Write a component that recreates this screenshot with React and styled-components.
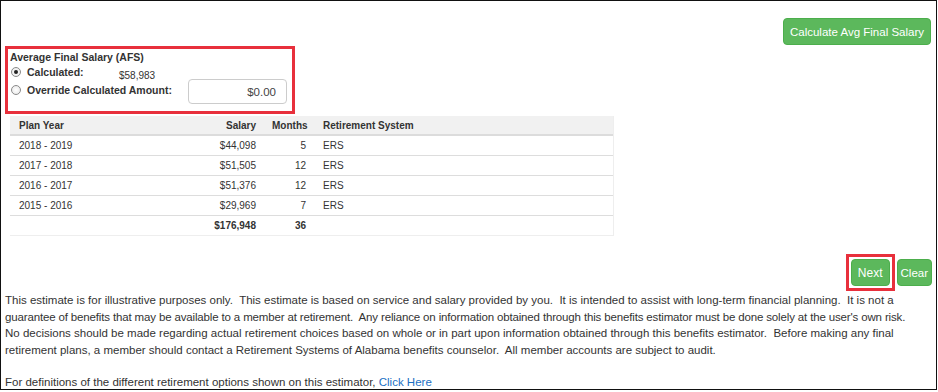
import styled, { createGlobalStyle } from 'styled-components';

const GlobalStyle = createGlobalStyle`
  html, body {
    margin: 0;
    padding: 0;
    background: #fff;
  }
  body {
    font-family: "Liberation Sans", Arial, sans-serif;
    font-size: 11.5px;
    color: #333;
  }
`;

const Frame = styled.div`
  box-sizing: border-box;
  width: 937px;
  height: 390px;
  border: 1px solid #111;
  padding: 0 2px 0 3px;
  overflow: hidden;
`;

const TopBar = styled.div`
  display: flex;
  justify-content: flex-end;
  padding-top: 17px;
  padding-right: 3px;
`;

const Button = styled.button`
  font-family: "Liberation Sans", Arial, sans-serif;
  font-size: ${({ fs }) => fs || 11.5}px;
  color: #fff;
  background: #5cb85c;
  border: 1px solid #4cae4c;
  border-radius: 4px;
  height: 27px;
  padding: 0 ${({ px }) => (px === undefined ? 6 : px)}px;
  cursor: pointer;
`;

const Marker = styled.span`
  display: inline-flex;
  border: 3px solid #e8303c;
  padding: 2px;
`;

const SalaryBox = styled.div`
  box-sizing: border-box;
  width: 290px;
  height: 68px;
  margin: 1px 0 0 1px;
  border: 3px solid #e8303c;
  padding: 2px 4px 0 2px;
  font-size: 10.5px;
`;

const BoxTitle = styled.div`
  font-weight: bold;
  line-height: 13px;
  margin-bottom: 2px;
`;

const RadioRow = styled.div`
  display: flex;
  align-items: flex-start;
  height: ${({ tall }) => (tall ? '24px' : '18px')};
`;

const Radio = styled.input`
  appearance: none;
  box-sizing: border-box;
  width: 10px;
  height: 10px;
  margin: 1px 6px 0 1px;
  border: 1px solid #8a8a8a;
  border-radius: 50%;
  background: radial-gradient(circle, #fff 0%, #e6e6e6 100%);
  display: grid;
  place-items: center;
  &:checked::after {
    content: '';
    width: 4px;
    height: 4px;
    border-radius: 50%;
    background: #222;
  }
`;

const RadioLabel = styled.label`
  font-weight: bold;
  width: ${({ w }) => w}px;
  white-space: nowrap;
  line-height: 12px;
`;

const Amount = styled.span`
  font-size: 10px;
  line-height: 12px;
  margin-top: 4px;
`;

const AmountInput = styled.input`
  box-sizing: border-box;
  width: 99px;
  height: 25px;
  margin-top: -5px;
  border: 1px solid #ccc;
  border-radius: 4px;
  text-align: right;
  padding: 0 10px;
  font-family: "Liberation Sans", Arial, sans-serif;
  font-size: 11.5px;
  color: #444;
`;

const Table = styled.div`
  width: 603px;
  margin: 2px 0 0 6px;
  border-right: 1px solid #eee;
  border-bottom: 1px solid #eee;
  font-size: 10px;
`;

const Row = styled.div`
  display: grid;
  grid-template-columns: 170px 83px 50px 1fr;
  height: ${({ head }) => (head ? '18px' : '19px')};
  background: ${({ head }) => (head ? '#f1f1f1' : '#fff')};
  border-bottom: ${({ head }) => (head ? '2px solid #dcdcdc' : '1px solid #ddd')};
  font-weight: ${({ bold }) => (bold ? 'bold' : 'normal')};
  align-items: center;
  &:last-child {
    border-bottom: none;
  }
`;

const Cell = styled.div`
  padding: 0 ${({ last }) => (last ? '8px 0 10px' : '7px 0 9px')};
  text-align: ${({ right }) => (right ? 'right' : 'left')};
`;

const ActionBar = styled.div`
  display: flex;
  justify-content: flex-end;
  align-items: center;
  gap: 2px;
  margin-top: 18px;
  padding-right: 2px;
`;

const Disclaimer = styled.div`
  margin: 1px 0 0 1px;
  line-height: 16.5px;
`;

const Line = styled.div`
  white-space: pre;
  letter-spacing: ${({ tight }) => (tight ? '-0.15px' : 'normal')};
`;

const Definitions = styled.p`
  margin: 16px 0 0 1px;
  line-height: 16.5px;
`;

const Link = styled.a`
  color: #1a6fc4;
  text-decoration: none;
`;

const rows = [
  ['2018 - 2019', '$44,098', '5', 'ERS'],
  ['2017 - 2018', '$51,505', '12', 'ERS'],
  ['2016 - 2017', '$51,376', '12', 'ERS'],
  ['2015 - 2016', '$29,969', '7', 'ERS'],
];

const disclaimer = [
  ['This estimate is for illustrative purposes only.  This estimate is based on service and salary provided by you.  It is intended to assist with long-term financial planning.  It is not a', false],
  ["guarantee of benefits that may be available to a member at retirement.  Any reliance on information obtained through this benefits estimator must be done solely at the user's own risk.", true],
  ['No decisions should be made regarding actual retirement choices based on whole or in part upon information obtained through this benefits estimator.  Before making any final', false],
  ['retirement plans, a member should contact a Retirement Systems of Alabama benefits counselor.  All member accounts are subject to audit.', false],
];

export default function App() {
  return (
    <>
      <GlobalStyle />
      <Frame>
        <TopBar>
          <Button>Calculate Avg Final Salary</Button>
        </TopBar>

        <SalaryBox>
          <BoxTitle>Average Final Salary (AFS)</BoxTitle>
          <RadioRow>
            <Radio type="radio" name="afs" defaultChecked />
            <RadioLabel w={92}>Calculated:</RadioLabel>
            <Amount>$58,983</Amount>
          </RadioRow>
          <RadioRow tall>
            <Radio type="radio" name="afs" />
            <RadioLabel w={161}>Override Calculated Amount:</RadioLabel>
            <AmountInput defaultValue="$0.00" />
          </RadioRow>
        </SalaryBox>

        <Table>
          <Row head bold>
            <Cell>Plan Year</Cell>
            <Cell right>Salary</Cell>
            <Cell right>Months</Cell>
            <Cell last>Retirement System</Cell>
          </Row>
          {rows.map((r) => (
            <Row key={r[0]}>
              <Cell>{r[0]}</Cell>
              <Cell right>{r[1]}</Cell>
              <Cell right>{r[2]}</Cell>
              <Cell last>{r[3]}</Cell>
            </Row>
          ))}
          <Row bold>
            <Cell />
            <Cell right>$176,948</Cell>
            <Cell right>36</Cell>
            <Cell last />
          </Row>
        </Table>

        <ActionBar>
          <Marker>
            <Button fs={12}>Next</Button>
          </Marker>
          <Button fs={11.5} px={3}>Clear</Button>
        </ActionBar>

        <Disclaimer>
          {disclaimer.map(([text, tight]) => (
            <Line key={text} tight={tight}>{text}</Line>
          ))}
        </Disclaimer>

        <Definitions>
          For definitions of the different retirement options shown on this estimator,{' '}
          <Link href="#">Click Here</Link>
        </Definitions>
      </Frame>
    </>
  );
}
